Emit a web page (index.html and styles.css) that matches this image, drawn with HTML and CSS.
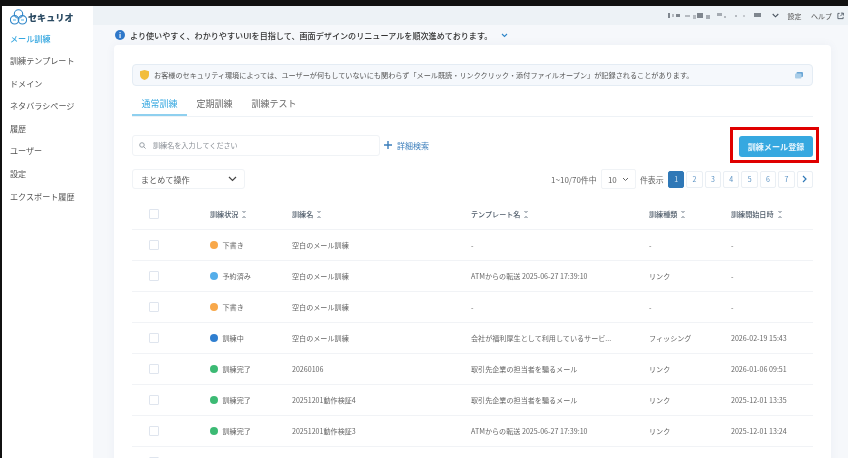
FILE: index.html
```html
<!DOCTYPE html>
<html lang="ja">
<head>
    <meta charset="UTF-8">
    <meta name="viewport" content="width=device-width, initial-scale=1.0">
    <title>メール訓練</title>
    <link rel="stylesheet" href="styles.css">
</head>
<body>
    <div class="app">
        <aside class="sidebar">
            <div class="logo">
                <svg width="17" height="16" viewBox="0 0 17 16" fill="none" stroke="#2f86c9" stroke-width="1.1">
                    <circle cx="8.5" cy="5" r="4.2"/>
                    <circle cx="4.6" cy="10.8" r="4.2"/>
                    <circle cx="12.4" cy="10.8" r="4.2"/>
                    <path d="M3 11h3M11 11h3" stroke="#4fb3e6"/>
                </svg>
                <span>セキュリオ</span>
            </div>
            <nav class="nav">
                <a class="nav-item active">メール訓練</a>
                <a class="nav-item">訓練テンプレート</a>
                <a class="nav-item">ドメイン</a>
                <a class="nav-item">ネタバラシページ</a>
                <a class="nav-item">履歴</a>
                <a class="nav-item">ユーザー</a>
                <a class="nav-item">設定</a>
                <a class="nav-item">エクスポート履歴</a>
            </nav>
        </aside>
        <main class="main">
            <header class="topbar">
                <svg class="account" width="96" height="8" viewBox="0 0 96 8" fill="#7f868e">
                    <rect x="0" y="1" width="2" height="5"/>
                    <rect x="4" y="2" width="2" height="3" fill="#b5bac0"/>
                    <rect x="8" y="2" width="4" height="3"/>
                    <rect x="17" y="3" width="5" height="2" fill="#b5bac0"/>
                    <rect x="25" y="3" width="3" height="4" fill="#b5bac0"/>
                    <rect x="29" y="1" width="6" height="5"/>
                    <rect x="38" y="3" width="4" height="4" fill="#a5abb2"/>
                    <rect x="49" y="1" width="5" height="3" fill="#a5abb2"/>
                    <rect x="56" y="4" width="2" height="2" fill="#b5bac0"/>
                    <rect x="67" y="3" width="2" height="2" fill="#b5bac0"/>
                    <rect x="75" y="3" width="2" height="2" fill="#c5c9ce"/>
                    <rect x="86" y="1" width="7" height="4"/>
                </svg>
                <svg class="chev" width="7" height="5" viewBox="0 0 7 5" fill="none" stroke="#4a5560" stroke-width="1.1"><path d="M.7 1l2.800 2.800L6.300 1"/></svg>
                <a class="top-link">設定</a>
                <a class="top-link help">ヘルプ
                    <svg width="7" height="8" viewBox="0 0 8 8" fill="none" stroke="#4a5560" stroke-width="1"><path d="M3 1H1v6h6V5M4.5.7h2.8v2.8M7.2.8L3.8 4.2"/></svg>
                </a>
            </header>

            <div class="announce">
                <span class="info-icon">i</span>
                <span>より使いやすく、わかりやすいUIを目指して、画面デザインのリニューアルを順次進めております。</span>
                <svg width="7" height="5" viewBox="0 0 7 5" fill="none" stroke="#2f86c9" stroke-width="1.1"><path d="M1 1l2.5 2.5L6 1"/></svg>
            </div>

            <section class="card">
                <div class="notice">
                    <svg width="9" height="10" viewBox="0 0 9 10"><path d="M4.500 0L9 1.300V5c0 2.600-2 4.200-4.500 5C2 9.200 0 7.600 0 5V1.300z" fill="#f2bd3c"/></svg>
                    <span class="notice-text">お客様のセキュリティ環境によっては、ユーザーが何もしていないにも関わらず「メール既読・リンククリック・添付ファイルオープン」が記録されることがあります。</span>
                    <svg width="8" height="7" viewBox="0 0 8 7"><rect x="1.500" y="0" width="6.500" height="5" rx="1" fill="#6aa6d6"/><rect x="0" y="1.500" width="6.500" height="5" rx="1" fill="#a9cde8"/></svg>
                </div>

                <div class="tabs">
                    <a class="tab active">通常訓練</a>
                    <a class="tab">定期訓練</a>
                    <a class="tab">訓練テスト</a>
                </div>

                <div class="search-row">
                    <div class="search">
                        <svg width="7" height="7" viewBox="0 0 8 8" fill="none" stroke="#8a929a" stroke-width="1"><circle cx="3.400" cy="3.400" r="2.600"/><path d="M5.400 5.400L7.500 7.500"/></svg>
                        <span>訓練名を入力してください</span>
                    </div>
                    <a class="detail">
                        <svg width="8" height="8" viewBox="0 0 8 8" fill="none" stroke="#3a7dbb" stroke-width="1.400"><path d="M4 0v8M0 4h8"/></svg>
                        <span>詳細検索</span>
                    </a>
                    <div class="register-outline">
                        <button class="register">訓練メール登録</button>
                    </div>
                </div>

                <div class="tools-row">
                    <div class="bulk">
                        <span>まとめて操作</span>
                        <svg width="9" height="6" viewBox="0 0 9 6" fill="none" stroke="#444" stroke-width="1.200"><path d="M1 1l3.500 3.500L8 1"/></svg>
                    </div>
                    <div class="paging">
                        <span class="count">1~10/70件中</span>
                        <div class="per-page">
                            <span>10</span>
                            <svg width="7" height="5" viewBox="0 0 7 5" fill="none" stroke="#666" stroke-width="1"><path d="M1 1l2.500 2.500L6 1"/></svg>
                        </div>
                        <span class="count">件表示</span>
                        <div class="pages">
                            <a class="page current">1</a>
                            <a class="page">2</a>
                            <a class="page">3</a>
                            <a class="page">4</a>
                            <a class="page">5</a>
                            <a class="page">6</a>
                            <a class="page">7</a>
                            <a class="page">
                                <svg width="5" height="8" viewBox="0 0 5 8" fill="none" stroke="#2f78b7" stroke-width="1.200"><path d="M1 1l3 3-3 3"/></svg>
                            </a>
                        </div>
                    </div>
                </div>

                <table class="list">
                    <colgroup>
                        <col class="c-check"><col class="c-status"><col class="c-name"><col class="c-template"><col class="c-type"><col class="c-date">
                    </colgroup>
                    <thead>
                        <tr>
                            <th><span class="check"></span></th>
                            <th>訓練状況<i class="sort"></i></th>
                            <th>訓練名<i class="sort"></i></th>
                            <th>テンプレート名<i class="sort"></i></th>
                            <th>訓練種類<i class="sort"></i></th>
                            <th>訓練開始日時<i class="sort"></i></th>
                        </tr>
                    </thead>
                    <tbody>
                        <tr>
                            <td><span class="check"></span></td>
                            <td><i class="dot draft"></i>下書き</td>
                            <td>空白のメール訓練</td>
                            <td>-</td>
                            <td>-</td>
                            <td>-</td>
                        </tr>
                        <tr>
                            <td><span class="check"></span></td>
                            <td><i class="dot reserved"></i>予約済み</td>
                            <td>空白のメール訓練</td>
                            <td>ATMからの転送 2025-06-27 17:39:10</td>
                            <td>リンク</td>
                            <td>-</td>
                        </tr>
                        <tr>
                            <td><span class="check"></span></td>
                            <td><i class="dot draft"></i>下書き</td>
                            <td>空白のメール訓練</td>
                            <td>-</td>
                            <td>-</td>
                            <td>-</td>
                        </tr>
                        <tr>
                            <td><span class="check"></span></td>
                            <td><i class="dot running"></i>訓練中</td>
                            <td>空白のメール訓練</td>
                            <td>会社が福利厚生として利用しているサービ...</td>
                            <td>フィッシング</td>
                            <td>2026-02-19 15:43</td>
                        </tr>
                        <tr>
                            <td><span class="check"></span></td>
                            <td><i class="dot done"></i>訓練完了</td>
                            <td>20260106</td>
                            <td>取引先企業の担当者を騙るメール</td>
                            <td>リンク</td>
                            <td>2026-01-06 09:51</td>
                        </tr>
                        <tr>
                            <td><span class="check"></span></td>
                            <td><i class="dot done"></i>訓練完了</td>
                            <td>20251201動作検証4</td>
                            <td>取引先企業の担当者を騙るメール</td>
                            <td>リンク</td>
                            <td>2025-12-01 13:35</td>
                        </tr>
                        <tr>
                            <td><span class="check"></span></td>
                            <td><i class="dot done"></i>訓練完了</td>
                            <td>20251201動作検証3</td>
                            <td>ATMからの転送 2025-06-27 17:39:10</td>
                            <td>リンク</td>
                            <td>2025-12-01 13:24</td>
                        </tr>
                        <tr>
                            <td><span class="check"></span></td>
                            <td></td><td></td><td></td><td></td><td></td>
                        </tr>
                    </tbody>
                </table>
            </section>
        </main>
    </div>
</body>
</html>
```

FILE: styles.css
```css
html, body {
    margin: 0;
    padding: 0;
    height: 100%;
    overflow: hidden;
}
body {
    background-color: #111;
    font-family: "Noto Sans CJK JP", "Noto Sans", sans-serif;
    color: #555;
    padding: 6px 0 0 2px;
    box-sizing: border-box;
}
.app {
    display: flex;
    height: 452px;
    background-color: #f6f8fb;
    overflow: hidden;
    filter: blur(0.4px);
}

/* sidebar */
.sidebar {
    width: 91px;
    flex-shrink: 0;
    background-color: #fff;
}
.logo {
    display: flex;
    align-items: center;
    gap: 1px;
    height: 21.500px;
    padding-left: 8px;
    font-size: 9.100px;
    font-weight: 900;
    color: #2a4a62;
}
.nav {
    display: flex;
    flex-direction: column;
}
.nav-item {
    height: 22.600px;
    line-height: 22.600px;
    padding-left: 8px;
    font-size: 8.100px;
    color: #555;
}
.nav-item.active {
    color: #35a7e0;
    font-weight: 500;
}

/* top */
.main {
    flex: 1;
    min-width: 0;
}
.topbar {
    display: flex;
    align-items: center;
    justify-content: flex-end;
    height: 19px;
    padding-right: 4px;
    background-color: #edf2f6;
    font-size: 7px;
    color: #555;
}
.account {
    margin-right: 8px;
    filter: blur(0.5px);
}
.chev {
    margin-right: 9px;
}
.top-link {
    margin-right: 9.500px;
}
.top-link.help {
    display: flex;
    align-items: center;
    gap: 5px;
    margin-right: 0;
}
.announce {
    display: flex;
    align-items: center;
    height: 20px;
    padding-left: 22px;
    font-size: 8.100px;
    font-weight: 500;
    color: #333;
}
.info-icon {
    width: 10px;
    height: 10px;
    margin-right: 5px;
    border-radius: 50%;
    background-color: #2f78c9;
    color: #fff;
    font-size: 7px;
    font-weight: 700;
    line-height: 10px;
    text-align: center;
}
.announce svg {
    margin-left: 9px;
}

/* card */
.card {
    margin-left: 21px;
    width: 717px;
    height: 420px;
    box-sizing: border-box;
    padding: 19px 18px 0;
    background-color: #fff;
    border-radius: 4px 4px 0 0;
    box-shadow: 0 0 10px rgba(60,90,130,0.06);
}
.notice {
    display: flex;
    align-items: center;
    height: 22px;
    box-sizing: border-box;
    padding: 0 9px 0 7px;
    background-color: #f5f8fc;
    border: 1px solid #e4ecf4;
    border-radius: 4px;
    font-size: 7.150px;
    color: #555;
}
.notice-text {
    flex: 1;
    margin-left: 5px;
}
.tabs {
    display: flex;
    margin-top: 8px;
    height: 22px;
    border-bottom: 1px solid #eef2f6;
}
.tab {
    padding: 0 9.500px;
    height: 22px;
    font-size: 9px;
    line-height: 20px;
    color: #666;
}
.tab.active {
    color: #35a7e0;
    border-bottom: 2px solid #8fd0ef;
    box-sizing: border-box;
}

/* search + register */
.search-row {
    display: flex;
    align-items: center;
    margin-top: 10px;
    height: 36px;
}
.search {
    display: flex;
    align-items: center;
    gap: 7px;
    width: 248px;
    height: 21px;
    box-sizing: border-box;
    padding-left: 6px;
    border: 1px solid #f0f3f6;
    border-radius: 3px;
    font-size: 7.100px;
    color: #8a8f96;
}
.detail {
    display: flex;
    align-items: center;
    gap: 5px;
    margin-left: 4px;
    font-size: 8px;
    color: #3a7dbb;
}
.register-outline {
    margin-left: auto;
    margin-right: -6px;
    padding: 6px 3px 3px 6px;
    border: 3px solid #e00000;
}
.register {
    display: block;
    width: 74px;
    height: 21px;
    padding: 0;
    border: 0;
    border-radius: 3px;
    background-color: #36a8e0;
    color: #e6f5fd;
    font-family: inherit;
    font-size: 8.100px;
    font-weight: 700;
}

/* bulk + paging */
.tools-row {
    display: flex;
    align-items: center;
    justify-content: space-between;
    margin-top: 6px;
    height: 20px;
}
.bulk {
    display: flex;
    align-items: center;
    justify-content: space-between;
    width: 113px;
    height: 20px;
    box-sizing: border-box;
    padding: 0 7px 0 8px;
    border: 1px solid #f0f3f6;
    border-radius: 3px;
    font-size: 8.100px;
    color: #555;
}
.paging {
    display: flex;
    align-items: center;
    font-size: 8px;
    color: #666;
}
.per-page {
    display: flex;
    align-items: center;
    justify-content: space-between;
    width: 35px;
    height: 20px;
    box-sizing: border-box;
    margin: 0 4px 0 4px;
    padding: 0 6px 0 6px;
    border: 1px solid #f0f3f6;
    border-radius: 2px;
}
.pages {
    display: flex;
    gap: 2px;
    margin-left: 4px;
}
.page {
    display: flex;
    align-items: center;
    justify-content: center;
    width: 16.400px;
    height: 17px;
    box-sizing: border-box;
    border: 1px solid #eaeff4;
    border-radius: 2px;
    font-size: 7px;
    color: #5c93c4;
}
.page.current {
    background-color: #2f78b7;
    border-color: #2f78b7;
    color: #d5e6f4;
}

/* table */
.list {
    table-layout: fixed;
    width: 681px;
    margin-top: 10px;
    border-collapse: collapse;
    font-size: 7.100px;
    color: #666;
}
.c-check { width: 78px; }
.c-status { width: 82px; }
.c-name { width: 179px; }
.c-template { width: 178px; }
.c-type { width: 82px; }
.c-date { width: 82px; }
.list th, .list td {
    height: 30px;
    padding: 0;
    border-bottom: 1px solid #f1f3f6;
    text-align: left;
    white-space: nowrap;
}
.list th {
    font-weight: 500;
    color: #4d5a68;
}
.check {
    display: block;
    width: 10px;
    height: 10px;
    margin-left: 17px;
    box-sizing: border-box;
    border: 1px solid #dfe5ee;
    border-radius: 1px;
    background-color: #fff;
}
.sort {
    display: inline-block;
    width: 4px;
    height: 7px;
    margin-left: 4px;
    vertical-align: -1px;
    background:
        linear-gradient(45deg, transparent 50%, #b6bcc3 50%) 0 0 / 2px 3px no-repeat,
        linear-gradient(-45deg, transparent 50%, #b6bcc3 50%) 2px 0 / 2px 3px no-repeat,
        linear-gradient(135deg, transparent 50%, #b6bcc3 50%) 0 4px / 2px 3px no-repeat,
        linear-gradient(-135deg, transparent 50%, #b6bcc3 50%) 2px 4px / 2px 3px no-repeat;
}
.dot {
    display: inline-block;
    width: 8px;
    height: 8px;
    margin-right: 4.500px;
    border-radius: 50%;
    vertical-align: -1px;
}
.dot.draft { background-color: #f8a84a; }
.dot.reserved { background-color: #55aeea; }
.dot.running { background-color: #2f7fd0; }
.dot.done { background-color: #3cba74; }
```
